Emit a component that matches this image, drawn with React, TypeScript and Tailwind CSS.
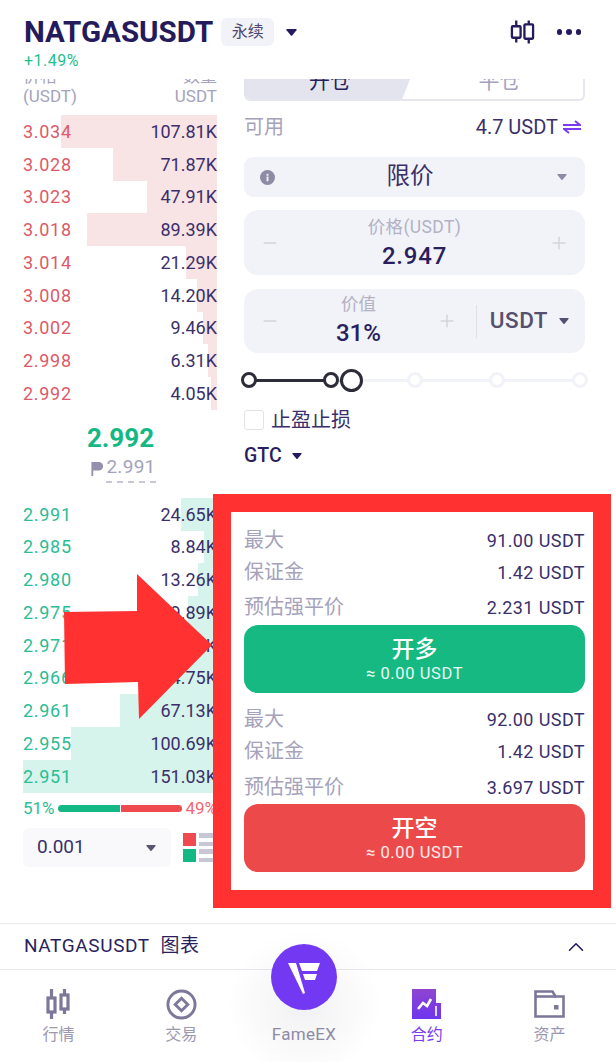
import { Minus, Plus, ChevronUp } from 'lucide-react';

const asks = [
  { p: '3.034', q: '107.81K', w: 156 },
  { p: '3.028', q: '71.87K', w: 104 },
  { p: '3.023', q: '47.91K', w: 70 },
  { p: '3.018', q: '89.39K', w: 130 },
  { p: '3.014', q: '21.29K', w: 31 },
  { p: '3.008', q: '14.20K', w: 20 },
  { p: '3.002', q: '9.46K', w: 14 },
  { p: '2.998', q: '6.31K', w: 9 },
  { p: '2.992', q: '4.05K', w: 6 },
];

const bids = [
  { p: '2.991', q: '24.65K', w: 36 },
  { p: '2.985', q: '8.84K', w: 13 },
  { p: '2.980', q: '13.26K', w: 19 },
  { p: '2.975', q: '19.89K', w: 29 },
  { p: '2.971', q: '33.15K', w: 48 },
  { p: '2.966', q: '44.75K', w: 65 },
  { p: '2.961', q: '67.13K', w: 97 },
  { p: '2.955', q: '100.69K', w: 146 },
  { p: '2.951', q: '151.03K', w: 194 },
];

function Caret({ className }: { className: string }) {
  return (
    <svg viewBox="0 0 12 9" className={className} fill="currentColor">
      <path d="M1.2 0.8h9.6c.7 0 1 .8.6 1.3L6.7 7.8c-.4.4-1 .4-1.4 0L.6 2.1C.2 1.6.5.8 1.2.8z" />
    </svg>
  );
}

function BookRow({ p, q, w, tone }: { p: string; q: string; w: number; tone: 'ask' | 'bid' }) {
  return (
    <div className="relative flex h-[32.75px] items-center justify-between text-[18px]">
      <div
        className={tone === 'ask' ? 'absolute inset-y-0 right-0 bg-[#f8e3e5]' : 'absolute inset-y-0 right-0 bg-[#d6f3ec]'}
        style={{ width: w }}
      />
      <span className={tone === 'ask' ? 'relative tracking-[0.7px] text-[#dc5a68]' : 'relative tracking-[0.7px] text-[#2bbd94]'}>{p}</span>
      <span className="relative text-[#3a2f6b]">{q}</span>
    </div>
  );
}

function Stat({ label, value, className }: { label: string; value: string; className: string }) {
  return (
    <div className={`flex items-center justify-between ${className}`}>
      <span className="text-[20px] text-[#a5a2bb]">{label}</span>
      <span className="text-[18px] tracking-[0.4px] text-[#3a2f6b]">{value}</span>
    </div>
  );
}

function TabItem({ label, active, children }: { label: string; active?: boolean; children: React.ReactNode }) {
  return (
    <div className="flex w-[122.8px] flex-col items-center">
      <div className="flex h-[32px] items-center justify-center">{children}</div>
      <span className={active ? 'mt-[3px] text-[16px] text-[#7a3cf0]' : 'mt-[3px] text-[16px] text-[#9c98b0]'}>{label}</span>
    </div>
  );
}

export default function App() {
  return (
    <div
      className="relative flex h-[1062px] w-[616px] flex-col overflow-hidden bg-white text-[#2a1f5e]"
      style={{ fontFamily: 'Roboto, "Noto Sans CJK SC", sans-serif' }}
    >
      {/* header */}
      <header className="relative z-10 h-[79px] shrink-0 bg-white pt-[13px] pr-[35px] pl-[24px]">
        <div className="flex items-center">
          <span className="text-[29.5px] leading-[38px] font-bold text-[#241a5c]">NATGASUSDT</span>
          <span className="ml-[8px] flex h-[28px] w-[53px] items-center justify-center rounded-[6px] bg-[#f2f3f8] text-[16px] text-[#4d4573]">永续</span>
          <Caret className="ml-[12px] h-[9px] w-[11px] text-[#241a5c]" />
          <svg viewBox="0 0 26 24" className="ml-auto h-[24px] w-[25px]" fill="none" stroke="#241a5c" strokeWidth="2.4">
            <path d="M6.5 0v6M6.5 18v5M19.5 0v4M19.5 19v5" />
            <rect x="2" y="6" width="9" height="12" rx="1" />
            <rect x="15" y="4" width="9" height="15" rx="1" />
          </svg>
          <div className="ml-[22px] flex gap-[4px]">
            <span className="h-[5.5px] w-[5.5px] rounded-full bg-[#241a5c]" />
            <span className="h-[5.5px] w-[5.5px] rounded-full bg-[#241a5c]" />
            <span className="h-[5.5px] w-[5.5px] rounded-full bg-[#241a5c]" />
          </div>
        </div>
        <div className="text-[16px] leading-[20px] tracking-[0.5px] text-[#1fc08e]">+1.49%</div>
      </header>

      {/* trade area */}
      <main className="flex h-[844px] shrink-0 overflow-hidden pr-[31px] pl-[23px]">
        <section className="w-[194px] shrink-0">
          <div className="-mt-[13px] flex justify-between text-[17px] leading-[20px] text-[#a5a2bb]">
            <div>
              <div>价格</div>
              <div>(USDT)</div>
            </div>
            <div className="text-right">
              <div>数量</div>
              <div>USDT</div>
            </div>
          </div>
          <div className="mt-[9px]">
            {asks.map((r) => (
              <BookRow key={r.p} {...r} tone="ask" />
            ))}
          </div>
          <div className="mt-[12px] flex flex-col items-center pl-[1px]">
            <span className="text-[26px] leading-[32px] font-bold text-[#14b884]">2.992</span>
            <div className="mt-[2px] ml-[6px] flex items-center">
              <svg viewBox="0 0 12 15" className="mr-[3px] h-[14px] w-[12px]" fill="#9590ae">
                <path d="M0 0h8a4 4 0 0 1 0 9H2v6H0z" />
              </svg>
              <span className="border-b-2 border-dashed border-[#c9c7d6] pb-[3px] text-[19px] leading-[22px] tracking-[0.3px] text-[#a5a2bb]">2.991</span>
            </div>
          </div>
          <div className="mt-[15px]">
            {bids.map((r) => (
              <BookRow key={r.p} {...r} tone="bid" />
            ))}
          </div>
          <div className="mt-[3px] flex items-center text-[17px]">
            <span className="text-[#2bbd94]">51%</span>
            <div className="mx-[3px] flex h-[7px] flex-1 gap-[1px]">
              <div className="flex-1 rounded-l-full bg-[#14b884]" />
              <div className="flex-1 rounded-r-full bg-[#ef4a4f]" />
            </div>
            <span className="text-[#ef6a70]">49%</span>
          </div>
          <div className="mt-[7px] flex items-center">
            <div className="flex h-[39px] w-[149px] items-center justify-between rounded-[6px] bg-[#f9f9fb] pr-[15px] pl-[14px] text-[19px] text-[#3a2f6b]">
              0.001
              <Caret className="h-[8px] w-[10px] text-[#5a5670]" />
            </div>
            <div className="ml-[12px] grid grid-cols-[13px_18px] gap-x-[3px] gap-y-[3px]">
              <div className="h-[13px] bg-[#ef4a4f]" />
              <div className="flex flex-col justify-between">
                <div className="h-[4.5px] bg-[#c9c7d6]" />
                <div className="h-[4.5px] bg-[#c9c7d6]" />
              </div>
              <div className="h-[13px] bg-[#14b884]" />
              <div className="flex flex-col justify-between">
                <div className="h-[4.5px] bg-[#c9c7d6]" />
                <div className="h-[4.5px] bg-[#c9c7d6]" />
              </div>
            </div>
          </div>
        </section>

        <section className="ml-[27px] w-[341px] shrink-0">
          <div className="relative -mt-[15px] flex h-[37px] overflow-hidden rounded-b-[6px] border-r-2 border-b-2 border-[#e6e6ef] text-[21px]">
            <div className="flex w-[172px] items-center justify-center bg-[#e3e4ed] text-[#2a1f5e]" style={{ clipPath: 'polygon(0 0, 100% 0, 92% 100%, 0 100%)' }}>开仓</div>
            <div className="flex flex-1 items-center justify-center text-[#a5a2bb]">平仓</div>
          </div>
          <div className="mt-[12px] flex h-[28px] items-center justify-between pr-[4px]">
            <span className="text-[20px] text-[#a5a2bb]">可用</span>
            <span className="flex items-center text-[20px] text-[#3a2f6b]">
              4.7 USDT
              <svg viewBox="0 0 18 14" className="ml-[5px] h-[14px] w-[18px]" fill="none" stroke="#7a3cf0" strokeWidth="2">
                <path d="M0 5h17L12 1M18 9H1l5 4" />
              </svg>
            </span>
          </div>
          <div className="mt-[16px] flex h-[40px] items-center justify-between rounded-[9px] bg-[#f2f3f8] pr-[18px] pl-[16px]">
            <svg viewBox="0 0 16 16" className="h-[15px] w-[15px]">
              <circle cx="8" cy="8" r="8" fill="#8f8ba5" />
              <path d="M7 7h2v5H7zM7 4h2v2H7z" fill="#f2f3f8" />
            </svg>
            <span className="mr-[12px] text-[23.5px] text-[#3a2f6b]">限价</span>
            <Caret className="h-[8px] w-[10px] text-[#8f8ba5]" />
          </div>
          <div className="mt-[13px] flex h-[65px] items-center justify-between rounded-[14px] bg-[#f2f3f8] px-[16px]">
            <Minus className="h-[20px] w-[20px] text-[#d3d3de]" strokeWidth={1.8} />
            <div className="flex flex-col items-center pt-[2px]">
              <span className="text-[17.5px] leading-[24px] tracking-[0.4px] text-[#b3b1c4]">价格(USDT)</span>
              <span className="text-[24px] leading-[34px] font-medium tracking-[0.8px] text-[#2a1f5e]">2.947</span>
            </div>
            <Plus className="h-[20px] w-[20px] text-[#d3d3de]" strokeWidth={1.8} />
          </div>
          <div className="mt-[14px] flex h-[64px] items-center rounded-[14px] bg-[#f2f3f8] px-[16px]">
            <Minus className="h-[20px] w-[20px] text-[#d3d3de]" strokeWidth={1.8} />
            <div className="flex flex-1 flex-col items-center">
              <span className="text-[17.5px] leading-[24px] text-[#b3b1c4]">价值</span>
              <span className="text-[24px] leading-[34px] font-medium text-[#2a1f5e]">31%</span>
            </div>
            <Plus className="h-[20px] w-[20px] text-[#d3d3de]" strokeWidth={1.8} />
            <div className="mr-[13px] ml-[19px] h-[33px] w-[1px] bg-[#dfdfe8]" />
            <span className="text-[22.5px] font-medium tracking-[0.5px] text-[#55506f]">USDT</span>
            <Caret className="ml-[11px] h-[8px] w-[10px] text-[#55506f]" />
          </div>
          {/* leverage slider */}
          <div className="relative -mx-[3px] mt-[15px] flex h-[24px] items-center justify-between">
            <div className="absolute inset-x-[4px] top-[10.5px] h-[3px] bg-[#f2f3f8]" />
            <div className="absolute top-[10.5px] left-[4px] h-[3px] w-[100px] bg-[#2d2d3a]" />
            <span className="relative h-[16px] w-[16px] rounded-full border-[3px] border-[#2d2d3a] bg-white" />
            <span className="relative h-[16px] w-[16px] rounded-full border-[3px] border-[#f2f3f8] bg-white" />
            <span className="relative h-[16px] w-[16px] rounded-full border-[3px] border-[#f2f3f8] bg-white" />
            <span className="relative h-[16px] w-[16px] rounded-full border-[3px] border-[#f2f3f8] bg-white" />
            <span className="relative h-[16px] w-[16px] rounded-full border-[3px] border-[#f2f3f8] bg-white" />
            <span className="absolute left-[82px] h-[16px] w-[16px] rounded-full border-[3px] border-[#2d2d3a] bg-white" />
            <span className="absolute left-[99px] h-[23px] w-[23px] rounded-full border-[3px] border-[#2d2d3a] bg-white" />
          </div>
          <div className="mt-[17px] flex items-center">
            <span className="h-[20px] w-[20px] rounded-[3px] border border-[#e2e2ea]" />
            <span className="ml-[7px] text-[20px] leading-[22px] text-[#3a2f6b]">止盈止损</span>
          </div>
          <div className="mt-[12px] flex items-center">
            <span className="text-[19.5px] leading-[26px] font-medium text-[#2a1f5e]">GTC</span>
            <Caret className="ml-[10px] h-[8px] w-[10px] text-[#241a5c]" />
          </div>

          <Stat label="最大" value="91.00 USDT" className="mt-[57px] h-[28px]" />
          <Stat label="保证金" value="1.42 USDT" className="mt-[4px] h-[28px]" />
          <Stat label="预估强平价" value="2.231 USDT" className="mt-[7px] h-[28px]" />
          <button className="mt-[4px] flex h-[68px] w-full flex-col items-center justify-center rounded-[14px] bg-[#15b981] pt-[2px] text-white">
            <span className="text-[23px] leading-[28px] font-medium">开多</span>
            <span className="text-[16.5px] leading-[20px] tracking-[0.6px] text-white/90">≈ 0.00 USDT</span>
          </button>
          <Stat label="最大" value="92.00 USDT" className="mt-[12px] h-[28px]" />
          <Stat label="保证金" value="1.42 USDT" className="mt-[4px] h-[28px]" />
          <Stat label="预估强平价" value="3.697 USDT" className="mt-[8px] h-[28px]" />
          <button className="mt-[3px] flex h-[68px] w-full flex-col items-center justify-center rounded-[14px] bg-[#ec4a4a] pt-[2px] text-white">
            <span className="text-[23px] leading-[28px] font-medium">开空</span>
            <span className="text-[16.5px] leading-[20px] tracking-[0.6px] text-white/90">≈ 0.00 USDT</span>
          </button>
        </section>
      </main>

      {/* chart toggle */}
      <div className="flex h-[47px] shrink-0 items-center justify-between border-y border-[#e8e8ee] bg-white pr-[27px] pl-[24px] text-[19px] text-[#2a1f5e]">
        <span className="tracking-[0.6px]">NATGASUSDT&nbsp;&nbsp;图表</span>
        <ChevronUp className="h-[26px] w-[26px] text-[#241a5c]" strokeWidth={1.4} />
      </div>

      {/* bottom nav */}
      <nav className="-ml-[3px] flex flex-1 bg-white pt-[18px]">
        <TabItem label="行情">
          <svg viewBox="0 0 24 30" className="h-[30px] w-[24px]" fill="none" stroke="#7d7799" strokeWidth="3.2">
            <path d="M5.5 0v30M18.5 0v25" />
            <rect x="2" y="9" width="7" height="14" fill="#fff" />
            <rect x="15" y="6" width="7" height="14" fill="#fff" />
          </svg>
        </TabItem>
        <TabItem label="交易">
          <svg viewBox="0 0 32 32" className="h-[31px] w-[31px]" fill="none" stroke="#7d7799" strokeWidth="3">
            <circle cx="16" cy="16" r="14" />
            <path d="M16 9.5l6.5 6.5-6.5 6.5-6.5-6.5z" />
          </svg>
        </TabItem>
        <div className="w-[122.8px]" />
        <TabItem label="合约" active>
          <svg viewBox="0 0 29 30" className="h-[30px] w-[29px]">
            <defs>
              <linearGradient id="contract" x1="0" y1="0" x2="0" y2="1">
                <stop offset="0" stopColor="#8f45cf" />
                <stop offset="1" stopColor="#6d35f0" />
              </linearGradient>
            </defs>
            <path d="M0 0h24v14h5v16H0z" fill="url(#contract)" />
            <path d="M6 20l5-6 4 3 4-7" fill="none" stroke="#fff" strokeWidth="2.6" />
            <path d="M24 17v10" stroke="#fff" strokeWidth="1.6" />
          </svg>
        </TabItem>
        <TabItem label="资产">
          <svg viewBox="0 0 31 28" className="h-[28px] w-[31px]" fill="none" stroke="#7d7799" strokeWidth="2.6">
            <path d="M1.5 26.5V1.5h17l3 5h8v20z" />
            <path d="M1.5 6.5h20" />
            <rect x="20" y="15" width="4.5" height="4.5" fill="#7d7799" stroke="none" />
          </svg>
        </TabItem>
      </nav>

      {/* center FameEX button */}
      <div className="absolute top-[944px] left-[271px] flex w-[66px] flex-col items-center">
        <div className="absolute -top-[14px] -left-[44px] h-[150px] w-[154px] rounded-full bg-[radial-gradient(closest-side,rgba(120,120,140,0.1),rgba(255,255,255,0))]" />
        <div className="relative flex h-[66px] w-[66px] items-center justify-center rounded-full bg-[#7338f2]">
          <svg viewBox="0 0 32 34" className="h-[34px] w-[32px]" fill="#fff">
            <path d="M0 3h8l9 30-2 1z" />
            <path d="M11 3h21l-3 8H14z" />
            <path d="M15 14h14l-2 6H17z" />
          </svg>
        </div>
        <span className="relative mt-[14px] text-[17px] leading-[20px] tracking-[0.3px] whitespace-nowrap text-[#8f8ba5]">FameEX</span>
      </div>

      {/* red annotation drawn over the screenshot */}
      <div className="absolute top-[494px] left-[213px] h-[414px] w-[398px] border-[18px] border-[#ff3131]" />
      <svg viewBox="0 0 150 150" className="absolute top-[574px] left-[63px] h-[150px] w-[150px]" fill="#ff3131">
        <path d="M74 0L149 71 76 145 75 108 2 110 1 38 74 37z" />
      </svg>
    </div>
  );
}
